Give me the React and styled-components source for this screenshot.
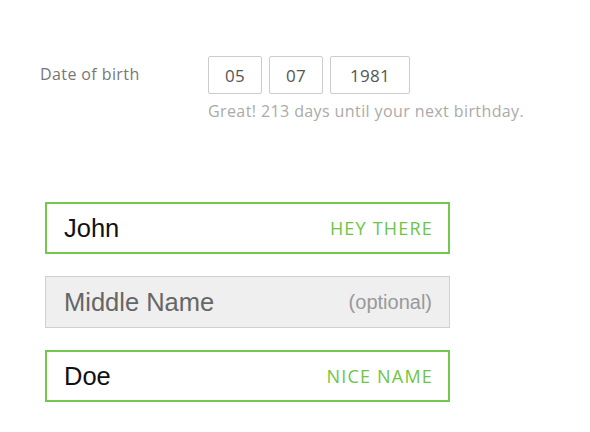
import styled, { createGlobalStyle } from 'styled-components'

const GlobalStyle = createGlobalStyle`
  body {
    margin: 0;
    background: #fff;
    font-family: "Open Sans", Lato, sans-serif;
  }
`

export default function App() {
  return (
    <Page>
      <GlobalStyle />
      <DateRow>
        <Label>Date of birth</Label>
        <div>
          <Boxes>
            <DateBox $w={54}>05</DateBox>
            <DateBox $w={54}>07</DateBox>
            <DateBox $w={80}>1981</DateBox>
          </Boxes>
          <Hint>Great! 213 days until your next birthday.</Hint>
        </div>
      </DateRow>
      <Fields>
        <Field $state="valid">
          <Value>John</Value>
          <Note>HEY THERE</Note>
        </Field>
        <Field $state="empty">
          <Value $muted>Middle Name</Value>
          <Optional>(optional)</Optional>
        </Field>
        <Field $state="valid">
          <Value>Doe</Value>
          <Note>NICE NAME</Note>
        </Field>
      </Fields>
    </Page>
  )
}

const Page = styled.div`
  padding: 56px 0 0 40px;
`

const DateRow = styled.div`
  display: flex;
  align-items: flex-start;
`

const Label = styled.div`
  width: 168px;
  font-size: 16px;
  letter-spacing: 0.4px;
  color: #777;
  line-height: 38px;
  margin-top: -1px;
`

const Boxes = styled.div`
  display: flex;
  gap: 7px;
`

const DateBox = styled.div`
  width: ${p => p.$w}px;
  height: 38px;
  box-sizing: border-box;
  border: 1px solid #ccc;
  border-radius: 2px;
  display: flex;
  align-items: center;
  justify-content: center;
  font-size: 17px;
  letter-spacing: 0.3px;
  color: #555;
`

const Hint = styled.div`
  margin-top: 6px;
  font-size: 16px;
  letter-spacing: 0.4px;
  color: #aaa;
`

const Fields = styled.div`
  margin-top: 80px;
  margin-left: 5px;
  display: flex;
  flex-direction: column;
  gap: 22px;
`

const Field = styled.div`
  width: 405px;
  height: 52px;
  box-sizing: border-box;
  display: flex;
  align-items: center;
  justify-content: space-between;
  padding: 0 16px 0 17px;
  border: ${p => (p.$state === 'valid' ? '2px solid #72c94d' : '1px solid #d0d0d0')};
  background: ${p => (p.$state === 'valid' ? '#fff' : '#efefef')};
  ${p => p.$state !== 'valid' && 'padding-left: 18px; padding-right: 17px;'}
`

const Value = styled.span`
  font-family: "Liberation Sans", Arial, sans-serif;
  font-size: 25.5px;
  color: ${p => (p.$muted ? '#666' : '#111')};
`

const Note = styled.span`
  font-size: 18px;
  letter-spacing: 1.2px;
  color: #6cc644;
  margin-right: -1px;
`

const Optional = styled.span`
  font-family: "Liberation Sans", Arial, sans-serif;
  font-size: 20px;
  color: #999;
`
